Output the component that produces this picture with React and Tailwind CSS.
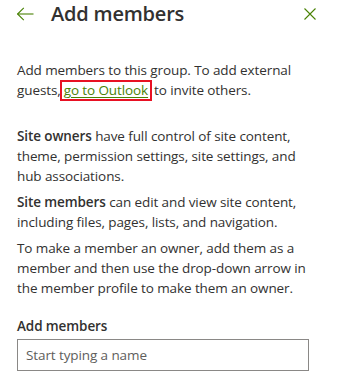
import React from 'react';

const App = () => {
  return (
    <div className="w-[340px] h-[380px] bg-white overflow-hidden text-[#323130] font-['Open_Sans',sans-serif]">
      {/* Header */}
      <div className="flex items-center h-[27px] pl-[17px] pr-[24px]">
        <svg width="17" height="14" viewBox="0 0 17 14" className="shrink-0" fill="none" stroke="#498205" strokeWidth="1.1">
          <path d="M0.5 7H16.5" />
          <path d="M6.8 0.8L0.6 7L6.8 13.2" />
        </svg>
        <h1 className="ml-[17px] text-[20px] leading-[27px] font-semibold tracking-[-0.2px]">Add members</h1>
        <svg width="12" height="12" viewBox="0 0 12 12" className="ml-auto shrink-0" fill="none" stroke="#498205" strokeWidth="1.1">
          <path d="M0.5 0.5L11.5 11.5M11.5 0.5L0.5 11.5" />
        </svg>
      </div>

      {/* Body */}
      <div className="px-[17px] w-[325px] text-[13.5px] leading-[20px] tracking-[-0.1px]">
        <p className="mt-[33px] whitespace-nowrap">
          Add members to this group. To add external
          <br />
          guests,
          <span className="inline-block -ml-[1px] px-[2px] h-[21px] border-2 border-[#e81123] leading-[17px]">
            <a className="text-[#498205] underline underline-offset-2">go to Outlook</a>
          </span>
          <span className="ml-[2px]">to invite others.</span>
        </p>

        <p className="mt-[25px] whitespace-nowrap">
          <span className="font-semibold">Site owners</span> have full control of site content,
          <br />
          theme, permission settings, site settings, and
          <br />
          hub associations.
        </p>

        <p className="mt-[6px] whitespace-nowrap">
          <span className="font-semibold">Site members</span> can edit and view site content,
          <br />
          including files, pages, lists, and navigation.
        </p>

        <p className="mt-[6px] whitespace-nowrap">
          To make a member an owner, add them as a
          <br />
          member and then use the drop-down arrow in
          <br />
          the member profile to make them an owner.
        </p>

        <label className="block mt-[18px] font-semibold">Add members</label>
        <div className="mt-[3px] w-[292px] h-[32px] border border-[#8a8886] flex items-center px-[8px]">
          <span className="text-[#605e5c]">Start typing a name</span>
        </div>
      </div>
    </div>
  );
};

export default App;
